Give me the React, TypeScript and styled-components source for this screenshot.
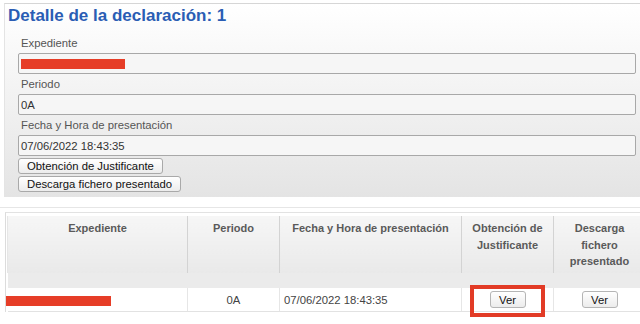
import React from "react";
import styled, { createGlobalStyle } from "styled-components";

const GlobalStyle = createGlobalStyle`
  html, body {
    margin: 0;
    padding: 0;
    background: #ffffff;
    overflow: hidden;
    font-family: "Liberation Sans", Arial, Helvetica, sans-serif;
  }
`;

const Page = styled.div`
  width: 640px;
  height: 324px;
  overflow: hidden;
  background: #ffffff;
`;

const Panel = styled.section`
  margin: 3px 0 0 4px;
  border-top: 1px solid #d6d6d6;
  border-left: 1px solid #e4e4e4;
  padding: 0 4px 5px 0;
  background: linear-gradient(to bottom, #ffffff 0%, #f3f3f3 45%, #e4e4e4 100%);
`;

const Title = styled.h1`
  margin: 0;
  padding: 2px 0 0 3px;
  font-size: 17px;
  line-height: 20px;
  font-weight: bold;
  color: #2a5db4;
`;

const Form = styled.div`
  margin-top: 7px;
  padding-left: 13px;
  display: flex;
  flex-direction: column;
`;

const Label = styled.div`
  height: 20px;
  line-height: 20px;
  padding-left: 3px;
  font-size: 11.3px;
  color: #555555;
`;

const Field = styled.div`
  box-sizing: border-box;
  height: 21px;
  border: 1px solid #a8a8a8;
  border-radius: 2px;
  background: #f6f6f6;
  padding-left: 2px;
  display: flex;
  align-items: center;
  font-size: 11.3px;
  color: #333333;
`;

const Redacted = styled.span<{ $w: number; $h: number; $shift?: number }>`
  display: inline-block;
  vertical-align: middle;
  width: ${(p) => p.$w}px;
  height: ${(p) => p.$h}px;
  margin-left: ${(p) => p.$shift ?? 0}px;
  background: #e63d27;
`;

const Actions = styled.div`
  margin-top: 2px;
  display: flex;
  flex-direction: column;
  align-items: flex-start;
  gap: 2px;
`;

const Button = styled.button`
  box-sizing: border-box;
  height: 16px;
  padding: 0 8px;
  margin: 0;
  border: 1px solid #a9a9a9;
  border-radius: 3px;
  background: linear-gradient(to bottom, #ffffff, #ececec);
  font-family: "Liberation Sans", Arial, Helvetica, sans-serif;
  font-size: 11.3px;
  line-height: 14px;
  color: #111111;
  cursor: pointer;
`;

const SmallButton = styled(Button)`
  width: 36px;
  height: 17px;
  padding: 0;
  border-color: #b5b5b5;
`;

const Separator = styled.div`
  margin-top: 10px;
  border-top: 1px solid #e6e6e6;
`;

const TableWrap = styled.div`
  margin: 4px 0 0 5px;
  border-top: 1px solid #e2e2e2;
  border-left: 1px solid #dcdcdc;
  padding: 3px 0 0 1px;
`;

const Table = styled.table`
  border-collapse: collapse;
  table-layout: fixed;
  width: 638px;
  font-size: 11.3px;
`;

const HeadCell = styled.th<{ $first?: boolean }>`
  height: 57px;
  box-sizing: border-box;
  padding: 4px 5px 0;
  vertical-align: top;
  text-align: center;
  font-size: 11px;
  line-height: 16.5px;
  font-weight: bold;
  color: #5a5a5a;
  background: linear-gradient(to bottom, #f6f6f6, #e9e9e9);
  border-right: 1px solid #d3d3d3;
  border-left: ${(p) => (p.$first ? "1px solid #e6e6e6" : "none")};
`;

const SpacerCell = styled.td`
  height: 15px;
  padding: 0;
  background: #ebebeb;
`;

const DataCell = styled.td<{ $align?: string; $pad?: number }>`
  height: 23px;
  padding: 0 0 0 ${(p) => p.$pad ?? 0}px;
  text-align: ${(p) => p.$align ?? "center"};
  vertical-align: middle;
  color: #444444;
  background: #ffffff;
  border-right: 1px solid #e6e6e6;
  border-bottom: 1px solid #e2e2e2;
`;

const Highlight = styled.div`
  position: relative;
  display: flex;
  justify-content: center;
`;

const Annotation = styled.span`
  position: absolute;
  left: 8px;
  right: 8px;
  top: -6px;
  bottom: -9px;
  border: 4px solid #e23b26;
  pointer-events: none;
`;

export default function App() {
  return (
    <Page>
      <GlobalStyle />
      <Panel>
        <Title>Detalle de la declaración: 1</Title>
        <Form>
          <Label>Expediente</Label>
          <Field>
            <Redacted $w={104} $h={10} />
          </Field>
          <Label>Periodo</Label>
          <Field>0A</Field>
          <Label>Fecha y Hora de presentación</Label>
          <Field>07/06/2022 18:43:35</Field>
          <Actions>
            <Button>Obtención de Justificante</Button>
            <Button>Descarga fichero presentado</Button>
          </Actions>
        </Form>
      </Panel>
      <Separator />
      <TableWrap>
        <Table>
          <colgroup>
            <col style={{ width: 180 }} />
            <col style={{ width: 92 }} />
            <col style={{ width: 182 }} />
            <col style={{ width: 92 }} />
            <col style={{ width: 92 }} />
          </colgroup>
          <thead>
            <tr>
              <HeadCell $first>Expediente</HeadCell>
              <HeadCell>Periodo</HeadCell>
              <HeadCell>Fecha y Hora de presentación</HeadCell>
              <HeadCell>Obtención de Justificante</HeadCell>
              <HeadCell>Descarga fichero presentado</HeadCell>
            </tr>
          </thead>
          <tbody>
            <tr>
              <SpacerCell colSpan={5} />
            </tr>
            <tr>
              <DataCell $align="left">
                <Redacted $w={105} $h={10} $shift={-2} />
              </DataCell>
              <DataCell>0A</DataCell>
              <DataCell $align="left" $pad={4}>
                07/06/2022 18:43:35
              </DataCell>
              <DataCell>
                <Highlight>
                  <SmallButton>Ver</SmallButton>
                  <Annotation />
                </Highlight>
              </DataCell>
              <DataCell>
                <Highlight>
                  <SmallButton>Ver</SmallButton>
                </Highlight>
              </DataCell>
            </tr>
          </tbody>
        </Table>
      </TableWrap>
    </Page>
  );
}
